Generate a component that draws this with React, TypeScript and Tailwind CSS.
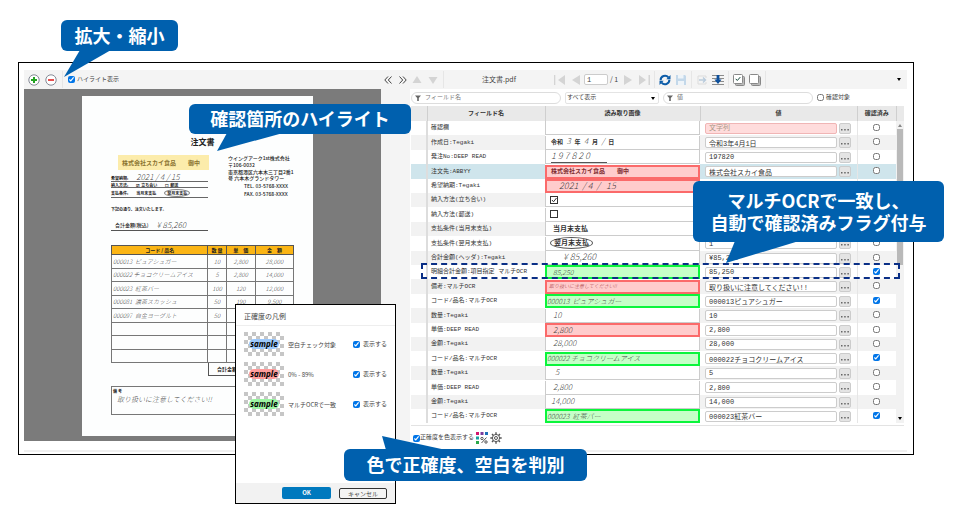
import type { ReactNode } from "react";
import clsx from "clsx";

type Tone = "none" | "red" | "green";

interface FieldRow {
  name: string;
  scan: ReactNode;
  value: string;
  tone?: Tone;
  checked?: boolean;
  selected?: boolean;
  empty?: boolean;
}

const Pen = ({ children }: { children: ReactNode }) => (
  <span className="font-['Noto_Sans_CJK_JP',sans-serif] font-light italic text-[#2a2a2a]/90 whitespace-pre">{children}</span>
);

const rows: FieldRow[] = [
  { name: "確認欄", scan: "", value: "文字列", empty: true },
  {
    name: "作成日:Tegaki",
    scan: <span className="pl-1 text-[6px] font-bold whitespace-pre">令和 <span className="text-[8px]"><Pen>3</Pen></span> 年 <span className="text-[8px]"><Pen>4</Pen></span> 月 <span className="text-[8px]"><Pen>/</Pen></span> 日</span>,
    value: "令和3年4月1日",
  },
  {
    name: "発注No:DEEP READ",
    scan: <span className="ml-1 w-[56px] border-b border-[#555] text-[9px]"><Pen>1 9 7 8 2 0</Pen></span>,
    value: "197820",
  },
  {
    name: "注文先:ABBYY",
    scan: <span className="pl-1 text-[6px] font-bold text-[#7d2b2f] whitespace-pre">株式会社スカイ食品　　御中</span>,
    value: "株式会社スカイ食品",
    tone: "red",
    selected: true,
  },
  { name: "希望納期:Tegaki", scan: <span className="pl-3 text-[9px]"><Pen>2021  / 4  /   15</Pen></span>, value: "", tone: "red" },
  { name: "納入方法(立ち合い)", scan: <PrintedBox checked />, value: "" },
  { name: "納入方法(郵送)", scan: <PrintedBox />, value: "" },
  { name: "支払条件(当月末支払)", scan: <span className="pl-1.5 text-[7px] font-bold">当月末支払</span>, value: "" },
  {
    name: "支払条件(翌月末支払)",
    scan: <span className="ml-[3px] rounded-[50%] border border-[#555] px-[3px] text-[7px] font-bold">翌月末支払</span>,
    value: "1",
  },
  { name: "合計金額(ヘッダ):Tegaki", scan: <span className="pl-4 text-[9px]"><Pen>¥ 85,260</Pen></span>, value: "¥85,260" },
  { name: "明細合計金額:項目指定 マルチOCR", scan: <span className="pl-1.5 text-[7px]"><Pen>85,250</Pen></span>, value: "85,250", tone: "green", checked: true },
  { name: "備考:マルチOCR", scan: <span className="pl-0.5 text-[5px]"><Pen><span className="text-[#a5343a]">取り扱いに注意してください!!</span></Pen></span>, value: "取り扱いに注意してください!!", tone: "red" },
  { name: "コード/品名:マルチOCR", scan: <span className="text-[7px]"><Pen>000013  ピュアシュガー</Pen></span>, value: "000013ピュアシュガー", tone: "green", checked: true },
  { name: "数量:Tegaki", scan: <span className="pl-1.5 text-[8px]"><Pen>10</Pen></span>, value: "10" },
  { name: "単価:DEEP READ", scan: <span className="pl-1.5 text-[8px]"><Pen>2,800</Pen></span>, value: "2,800", tone: "red" },
  { name: "金額:Tegaki", scan: <span className="pl-1.5 text-[8px]"><Pen>28,000</Pen></span>, value: "28,000" },
  { name: "コード/品名:マルチOCR", scan: <span className="text-[7px]"><Pen>000022 チョコクリームアイス</Pen></span>, value: "000022チョコクリームアイス", tone: "green", checked: true },
  { name: "数量:Tegaki", scan: <span className="pl-2 text-[8px]"><Pen>5</Pen></span>, value: "5" },
  { name: "単価:DEEP READ", scan: <span className="pl-1.5 text-[8px]"><Pen>2,800</Pen></span>, value: "2,800" },
  { name: "金額:Tegaki", scan: <span className="pl-1 text-[8px]"><Pen>14,000</Pen></span>, value: "14,000" },
  { name: "コード/品名:マルチOCR", scan: <span className="text-[7px]"><Pen>000023  紅茶バー</Pen></span>, value: "000023紅茶バー", tone: "green", checked: true },
];

const orderLines = [
  ["000013  ピュアシュガー", "10", "2,800", "28,000"],
  ["000022 チョコクリームアイス", "5", "2,800", "14,000"],
  ["000023  紅茶バー", "100", "120", "12,000"],
  ["000081  濃茶スカッシュ", "50", "190", "9,500"],
  ["000097  白金ヨーグルト", "50", "", ""],
  ["", "", "", ""],
  ["", "", "", ""],
  ["", "", "", ""],
];

function PrintedBox({ checked = false }: { checked?: boolean }) {
  return (
    <svg viewBox="0 0 8 8" className="ml-[3px] h-2 w-2" fill="none" stroke="#333">
      <rect x="0.5" y="0.5" width="7" height="7" />
      {checked && <path d="M2 4l1.5 1.8L6.5 2" />}
    </svg>
  );
}

function Tick({ label, checked = false, hideLabel = false, className }: { label: string; checked?: boolean; hideLabel?: boolean; className?: string }) {
  return (
    <label className={clsx("flex items-center text-[6px] leading-[8px] whitespace-nowrap", className ?? "gap-[3px]")}>
      <input type="checkbox" defaultChecked={checked} aria-label={hideLabel ? label : undefined} className="h-[7px] w-[7px] accent-[#0075e8]" />
      {!hideLabel && label}
    </label>
  );
}

function Divider() {
  return <span className="h-[17px] w-px bg-[#e6e6e6]" />;
}

function Chevrons({ flip = false }: { flip?: boolean }) {
  return (
    <svg viewBox="0 0 8 8" className={clsx("h-2 w-2", flip && "rotate-180")} fill="none" stroke="#444">
      <path d="M4 .5L.8 4 4 7.5M7.5 .5L4.3 4l3.2 3.5" />
    </svg>
  );
}

function Funnel() {
  return (
    <svg viewBox="0 0 6 6" className="h-[6px] w-[6px] shrink-0" fill="#666">
      <path d="M0 .5h6L3.8 3v3H2.2V3z" />
    </svg>
  );
}

function IconButton({ label, children }: { label: string; children: ReactNode }) {
  return (
    <button type="button" aria-label={label} className="flex h-3 w-3 shrink-0 items-center justify-center">
      {children}
    </button>
  );
}

function ZoomButton({ label, plus = false }: { label: string; plus?: boolean }) {
  return (
    <IconButton label={label}>
      <svg viewBox="0 0 12 12" className="h-3 w-3" fill="none">
        <circle cx="6" cy="6" r="5.2" fill="#fff" stroke="#858a96" />
        <path d="M3 6h6" stroke={plus ? "#22a322" : "#e02424"} strokeWidth={plus ? "2" : "1.6"} />
        {plus && <path d="M6 3v6" stroke="#22a322" strokeWidth="2" />}
      </svg>
    </IconButton>
  );
}

function Triangle({ d }: { d: string }) {
  return (
    <svg viewBox="0 0 12 12" className="h-3 w-3" fill="#d4d4d4">
      <path d={d} />
    </svg>
  );
}

function OrderSheet() {
  return (
    <div className="flex min-h-[340px] w-[231px] flex-col bg-[#fdfefe] pt-10 pr-[19px] pl-[29px] text-[5px] leading-[6px] text-[#222]">
      <h2 className="text-center text-[8px] leading-3 font-bold">注文書</h2>
      <div className="mt-[7px] flex gap-5">
        <div className="w-[97px]">
          <div className="ml-[7px] flex h-[15px] w-[91px] items-center bg-[#fcecab] pl-1 text-[6px] font-bold whitespace-pre text-[#8a7330]">
            株式会社スカイ食品　　御中
          </div>
          <div className="mt-1 flex h-2 items-end gap-2 border-b border-[#666] text-[4px] font-bold">
            希望納期:<span className="text-[8px] leading-[8px]"><Pen>2021 / 4 / 15</Pen></span>
          </div>
          <div className="flex h-[6px] items-center gap-2 border-b border-[#666] text-[4px] font-bold whitespace-nowrap">
            納入方法:<span>☑ 立ち会い</span><span>☐ 郵送</span>
          </div>
          <div className="flex h-[10px] items-center gap-2 border-b border-[#666] text-[4px] font-bold whitespace-nowrap">
            支払条件:<span>当月末支払</span>
            <span className="rounded-[50%] border border-[#888] px-0.5">翌月末支払</span>
          </div>
          <p className="mt-2 text-[4px] font-bold">下記の通り、注文いたします。</p>
          <div className="mt-2 flex h-[11px] items-center gap-2 border-b border-[#555] pl-1 font-medium whitespace-nowrap">
            合計金額(税込)<span className="text-[8px]"><Pen>¥ 85,260</Pen></span>
          </div>
        </div>
        <div className="font-medium whitespace-nowrap">
          <p>ウイングアーク1st株式会社</p>
          <p className="mt-px">〒106-0032</p>
          <p className="mt-px">東京都港区六本木三丁目2番1</p>
          <p>号 六本木グランドタワー</p>
          <p className="mt-0.5 ml-4">TEL. 03-5768-XXXX</p>
          <p className="mt-0.5 ml-4">FAX. 03-5768-XXXX</p>
        </div>
      </div>
      <table className="mt-[14px] w-full table-fixed border-collapse">
        <colgroup>
          <col className="w-[53%]" />
          <col className="w-[10%]" />
          <col className="w-[16%]" />
          <col className="w-[21%]" />
        </colgroup>
        <thead>
          <tr className="h-[9px] bg-[#fbb515] text-[5px]">
            {["コード / 品名", "数 量", "単　価", "金　額"].map((head) => (
              <th key={head} className="border border-[#555] p-0 whitespace-nowrap">{head}</th>
            ))}
          </tr>
        </thead>
        <tbody>
          {orderLines.map((line, i) => (
            <tr key={i} className="h-[14px] even:h-[13px]">
              {line.map((cell, j) => (
                <td key={j} className={clsx("overflow-hidden border border-[#777] p-0 text-[6px] whitespace-nowrap", j ? "text-center" : "pl-px")}>
                  <Pen>{cell}</Pen>
                </td>
              ))}
            </tr>
          ))}
        </tbody>
      </table>
      <div className="ml-[53%] flex h-[13px] items-center border border-t-0 border-[#555] pl-2 font-bold">合計金額</div>
      <div className="mt-[10px] h-[29px] border border-[#777] p-px text-[4px] font-bold">
        備 考
        <p className="pl-1 text-[7px] leading-[10px]"><Pen>取り扱いに注意してください!!</Pen></p>
      </div>
    </div>
  );
}

function ReviewToolbar() {
  return (
    <div className="flex h-[19px] items-center gap-1 bg-[#f4f4f4] pr-1.5 pl-px text-[7px]">
      <IconButton label="前の項目"><Triangle d="M6 2l4.5 7h-9z" /></IconButton>
      <IconButton label="次の項目"><Triangle d="M6 10l4.5-7h-9z" /></IconButton>
      <Divider />
      <span className="w-[102px] text-center font-['Noto_Sans_CJK_JP',sans-serif]">注文書.pdf</span>
      <IconButton label="最初のページ"><Triangle d="M0 1h1.3v10H0zM11 1v10L4 6z" /></IconButton>
      <div className="flex items-center gap-0.5">
        <IconButton label="前のページ"><Triangle d="M10 1v10L2 6z" /></IconButton>
        <input aria-label="ページ" defaultValue="1" className="h-[11px] w-6 rounded-xs border border-[#ccc] bg-white pl-0.5 text-[7px]" />
        <span className="w-2 font-['Noto_Sans_CJK_JP',sans-serif] whitespace-nowrap">/ 1</span>
      </div>
      <IconButton label="次のページ"><Triangle d="M2 1v10l8-5z" /></IconButton>
      <IconButton label="最後のページ"><Triangle d="M1 1v10l7-5zM10.5 1H12v10h-1.5z" /></IconButton>
      <Divider />
      <IconButton label="更新">
        <svg viewBox="0 0 12 12" className="h-3 w-3" fill="none" stroke="#0c5ca8" strokeWidth="2">
          <path d="M1.6 6.2A4.4 4.4 0 0 1 9.4 3.4M10.4 5.8A4.4 4.4 0 0 1 2.6 8.6" />
          <path d="M11.5 1v4.2H7.3zM.5 11V6.8h4.2z" fill="#0c5ca8" stroke="none" />
        </svg>
      </IconButton>
      <IconButton label="保存">
        <svg viewBox="0 0 12 12" className="h-3 w-3" fill="#c3d8ea">
          <path d="M1 1h9l1 1v9H1z" />
          <path d="M3 1h5.5v3.5H3zM3 7h6v4H3z" fill="#eef4f9" />
        </svg>
      </IconButton>
      <Divider />
      <IconButton label="移動">
        <svg viewBox="0 0 12 12" className="h-3 w-3" fill="none" stroke="#b9cbdc">
          <path d="M2 2h8v2M2 10h8V8M2 2v8" stroke="#dcdcdc" />
          <path d="M3 6h6M7 3.5L9.5 6 7 8.5" strokeWidth="1.4" />
        </svg>
      </IconButton>
      <IconButton label="取り込み">
        <svg viewBox="0 0 12 12" className="h-3 w-3" fill="none">
          <path d="M0 1.5h12M0 4.5h12M0 7.5h12M0 10.5h12" stroke="#8c8c8c" />
          <path d="M4.6 1h2.8v4.5h2.2L6 10 2.4 5.5h2.2z" fill="#0c4f9c" />
        </svg>
      </IconButton>
      <Divider />
      <IconButton label="すべて確認済み">
        <svg viewBox="0 0 12 12" className="h-3 w-3" fill="#fff" stroke="#888">
          <rect x="2.5" y="2.5" width="9" height="9" rx="1" fill="#bbb" />
          <rect x=".5" y=".5" width="9" height="9" rx="1" />
          <path d="M2.7 4.8l1.6 1.7 3-3.4" stroke="#174b3c" fill="none" />
        </svg>
      </IconButton>
      <IconButton label="すべて解除">
        <svg viewBox="0 0 12 12" className="h-3 w-3" fill="#fff" stroke="#888">
          <rect x="2.5" y="2.5" width="9" height="9" rx="1" fill="#bbb" />
          <rect x=".5" y=".5" width="9" height="9" rx="1" />
        </svg>
      </IconButton>
      <Divider />
      <button type="button" aria-label="メニュー" className="ml-auto">
        <svg viewBox="0 0 4 3" className="h-[3px] w-1"><path d="M0 0h4L2 3z" /></svg>
      </button>
    </div>
  );
}

function FilterBar() {
  return (
    <div className="flex h-[17px] items-center gap-1 text-[6px]">
      <label className="flex h-3 flex-1 items-center gap-1 rounded-full border border-[#ddd] pl-[3px]">
        <Funnel />
        <input aria-label="フィールド名" placeholder="フィールド名" className="w-full min-w-0 placeholder:text-[#777]" />
      </label>
      <span className="relative w-[94px]">
        <select aria-label="表示" className="h-3 w-full appearance-none rounded-xs border border-[#e4e4e4] pl-px text-[6px]">
          <option>すべて表示</option>
        </select>
        <svg viewBox="0 0 4 3" className="pointer-events-none absolute top-[5px] right-1 h-[3px] w-1"><path d="M0 0h4L2 3z" /></svg>
      </span>
      <label className="flex h-3 flex-1 items-center gap-1 rounded-full border border-[#ddd] pl-[3px]">
        <Funnel />
        <input aria-label="値" placeholder="値" className="w-full min-w-0 placeholder:text-[#777]" />
      </label>
      <Tick label="確認対象" className="w-[87px] gap-0.5" />
    </div>
  );
}

function FieldTable() {
  return (
    <div className="flex border-b border-[#e3e3e3] pb-0.5">
      <table className="min-w-0 flex-1 table-fixed border-collapse text-[#333]">
        <colgroup>
          <col className="w-4" />
          <col className="w-[118px]" />
          <col />
          <col className="w-[157px]" />
          <col className="w-[39px]" />
        </colgroup>
        <thead>
          <tr className="h-[15px] bg-[#e9e9e9] text-[6px] leading-[8px] font-bold">
            <th className="p-0" />
            {["フィールド名", "読み取り画像", "値", "確認済み"].map((head) => (
              <th key={head} className="border-l border-[#cfcfcf] p-0 whitespace-nowrap">{head}</th>
            ))}
          </tr>
        </thead>
        <tbody>
          {rows.map((row, i) => (
            <tr
              key={i}
              className={clsx("h-[14px] nth-[5n+2]:h-[15px] nth-[5n+4]:h-[15px]", row.selected ? "bg-[#cfe5ec]" : "even:bg-[#f2f2f2]")}
            >
              <td className="border-r-2 border-[#ddd] p-0" />
              <td className="p-0 pl-[3px] text-[6px] leading-[8px] whitespace-nowrap">{row.name}</td>
              <td className="bg-white p-0">
                <div
                  className={clsx(
                    "flex h-[14px] items-center leading-[10px]",
                    row.tone === "red" && "border-2 border-[#fb6a6a] bg-[#ffcccc]",
                    row.tone === "green" && "border-2 border-[#0bf53c] bg-[#c6ffc8]",
                    !row.tone && "border border-t-0 border-[#ccc] pl-px",
                  )}
                >
                  {row.scan}
                </div>
              </td>
              <td className="p-0">
                <div className="flex h-[11px] gap-0.5 pr-1.5 pl-[5px]">
                  <input
                    aria-label={row.name}
                    defaultValue={row.empty ? undefined : row.value}
                    placeholder={row.empty ? row.value : undefined}
                    className={clsx(
                      "h-[11px] min-w-0 flex-1 rounded-xs border pl-[3px] text-[7px] leading-[9px]",
                      row.empty ? "border-[#f0b5b5] bg-[#ffdcdc] placeholder:text-[#a98]" : "border-[#ccc] bg-white",
                    )}
                  />
                  <button type="button" aria-label={`${row.name} 詳細`} className="flex h-[11px] w-3 items-end justify-center rounded-xs border border-[#ccc] bg-[#e4e4e4] pb-0.5">
                    <svg viewBox="0 0 8 2" className="h-0.5 w-2" fill="#666">
                      <path d="M0 0h1.5v1.5H0zM3.2 0h1.5v1.5H3.2zM6.4 0h1.5v1.5H6.4z" />
                    </svg>
                  </button>
                </div>
              </td>
              <td className="border-l border-[#e6e6e6] p-0 pb-0.5">
                <Tick label={`${row.name} 確認済み`} hideLabel checked={row.checked} className="justify-center" />
              </td>
            </tr>
          ))}
        </tbody>
      </table>
      <div className="flex w-2 flex-col items-center bg-[#f2f2f2]">
        <div className="h-[15px] w-full border-l border-[#cfcfcf] bg-[#e9e9e9]" />
        <svg viewBox="0 0 4 3" className="mt-[3px] h-[3px] w-1" fill="#888"><path d="M0 3h4L2 0z" /></svg>
        <div className="mt-0.5 h-[43%] w-[6px] bg-[#b9b9b9]" />
        <svg viewBox="0 0 4 3" className="mt-auto mb-[3px] h-[3px] w-1"><path d="M0 0h4L2 3z" /></svg>
      </div>
    </div>
  );
}

const samples = [
  { label: "空白チェック対象", glow: "bg-[#9cc8fb]" },
  { label: "0% - 89%", glow: "bg-[#ff9c9c]" },
  { label: "マルチOCRで一致", glow: "bg-[#9cf5a2]" },
];

function LegendDialog() {
  return (
    <div role="dialog" aria-label="正確度の凡例" className="absolute top-[304px] left-[235px] flex h-[200px] w-[161px] flex-col border border-black bg-white font-['Noto_Sans_CJK_JP',sans-serif] text-[#444]">
      <h2 className="border-b border-[#eee] px-2 pt-1.5 pb-1 text-[7px] leading-[10px]">正確度の凡例</h2>
      <ul className="flex flex-1 flex-col gap-[6px] px-2 pt-1.5">
        {samples.map((sample) => (
          <li key={sample.label} className="flex h-6 items-center text-[6px]">
            <span className="flex h-6 w-10 items-center justify-center bg-[conic-gradient(#fff_25%,#c6c6c6_0_50%,#fff_0_75%,#c6c6c6_0)] bg-size-[8px_8px]">
              <span className={clsx("rounded-full px-px font-['Open_Sans',sans-serif] text-[8px] leading-[10px] font-bold italic text-black", sample.glow)}>sample</span>
            </span>
            <span className="ml-1 flex-1 whitespace-nowrap">{sample.label}</span>
            <Tick label="表示する" checked />
          </li>
        ))}
      </ul>
      <div className="flex h-5 items-center justify-end gap-2 bg-[#f2f2f2] pr-2 text-[6px]">
        <button type="button" className="h-3 w-[49px] rounded-xs bg-[#0079be] leading-[12px] font-bold text-white">OK</button>
        <button type="button" className="h-[11px] w-12 rounded-xs border border-[#333] bg-[#f4f4f4] leading-[9px]">キャンセル</button>
      </div>
    </div>
  );
}

function Callout({ className, tail, children }: { className: string; tail: ReactNode; children: ReactNode }) {
  return (
    <div className={clsx("absolute flex items-center justify-center rounded-md bg-[#0060ae] pb-0.5 text-center text-[18px] leading-[22px] font-bold whitespace-nowrap text-white", className)}>
      {tail}
      <span className="relative">{children}</span>
    </div>
  );
}

export default function App() {
  return (
    <main className="relative min-h-screen bg-white pt-[62px] pr-[46px] pl-[18px] font-['Liberation_Mono','Noto_Sans_CJK_JP',sans-serif] text-[#444]">
      <div className="grid grid-cols-[357fr_29px_497fr] border border-black pt-[7px] pr-1.5 pb-[2px] pl-[5px]">
        <section className="flex flex-col border-b-2 border-[#f0f0f0] pb-[9px]">
          <div className="flex h-[19px] items-center gap-[5px] bg-[#f4f4f4] pl-1">
            <ZoomButton label="拡大" plus />
            <ZoomButton label="縮小" />
            <Divider />
            <Tick label="ハイライト表示" checked className="gap-0.5" />
          </div>
          <div className="flex flex-1 items-start justify-center bg-[#7b7b7b] pt-[7px] pr-[10px] font-['Noto_Sans_CJK_JP',sans-serif]">
            <OrderSheet />
          </div>
        </section>

        <div className="grid grid-cols-2 justify-items-center border-b-2 border-[#f0f0f0] bg-[#f4f4f4] pt-[6px]">
          <button type="button" aria-label="左へ" className="h-2"><Chevrons /></button>
          <button type="button" aria-label="右へ" className="h-2"><Chevrons flip /></button>
        </div>

        <section className="flex flex-col border-b-2 border-[#f0f0f0]">
          <ReviewToolbar />
          <div className="pr-[3px] pl-px">
            <FilterBar />
            <FieldTable />
          </div>
          <div className="flex h-6 items-center gap-0.5 pl-[3px] text-[6px]">
            <Tick label="正確度を色表示する" checked className="gap-0" />
            <IconButton label="配色">
              <svg viewBox="0 0 12 12" className="h-3 w-3">
                <path d="M0 0h3v3H0z" fill="#d4146c" />
                <path d="M4.5 0h3v3h-3z" fill="#7a3c9c" />
                <path d="M9 0h3v3H9z" fill="#1c70b8" />
                <path d="M0 4.5h3v3H0z" fill="#18a0a0" />
                <path d="M0 9h3v3H0z" fill="#2aa84a" />
                <g fill="none" stroke="#555">
                  <circle cx="6" cy="6.5" r="1.2" />
                  <circle cx="10" cy="10" r="1.2" />
                  <path d="M10.5 5.5l-5 5.5" />
                </g>
              </svg>
            </IconButton>
            <IconButton label="設定">
              <svg viewBox="0 0 12 12" className="h-3 w-3" fill="none" stroke="#555">
                <circle cx="6" cy="6" r="3.6" />
                <circle cx="6" cy="6" r="1.5" />
                <path d="M6 .3v2M6 9.7v2M.3 6h2M9.7 6h2M2 2l1.4 1.4M8.6 8.6L10 10M10 2L8.6 3.4M3.4 8.6L2 10" strokeWidth="1.4" />
              </svg>
            </IconButton>
          </div>
        </section>
      </div>

      <div className="absolute top-[263px] left-[421px] h-4 w-[479px] border-2 border-dashed border-[#0a2f86]" />
      <LegendDialog />

      <div className="font-['Noto_Sans_CJK_JP',sans-serif]">
        <Callout
          className="top-[20px] left-[61px] h-[31px] w-[117px]"
          tail={<svg className="absolute top-[30px] left-0 h-7 w-14" viewBox="0 0 56 28" fill="#0060ae"><path d="M19 0h31L3 27z" /></svg>}
        >
          拡大・縮小
        </Callout>
        <Callout
          className="top-[104px] left-[189px] h-[30px] w-[222px]"
          tail={<svg className="absolute top-[29px] left-6 h-5 w-[72px]" viewBox="0 0 72 20" fill="#0060ae"><path d="M14 0h56L4 18z" /></svg>}
        >
          確認箇所のハイライト
        </Callout>
        <Callout
          className="top-[181px] left-[693px] h-[61px] w-[251px]"
          tail={<svg className="absolute top-[60px] left-8 h-6 w-20" viewBox="0 0 80 24" fill="#0060ae"><path d="M10 0h64L1 22z" /></svg>}
        >
          マルチOCRで一致し、<br />自動で確認済みフラグ付与
        </Callout>
        <Callout
          className="top-[449px] left-[344px] h-8 w-[243px]"
          tail={<svg className="absolute -top-[13px] left-9 h-[14px] w-[68px]" viewBox="0 0 68 14" fill="#0060ae"><path d="M2 0l4 14h60z" /></svg>}
        >
          色で正確度、空白を判別
        </Callout>
      </div>
    </main>
  );
}
